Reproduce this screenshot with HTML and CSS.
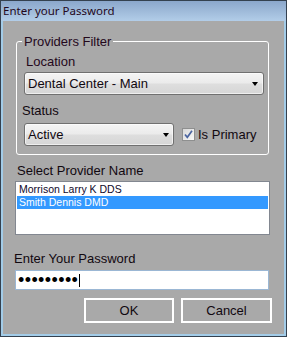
FILE: index.html
```html
<!DOCTYPE html>
<html>
<head>
<meta charset="utf-8">
<link rel="stylesheet" href="styles.css">
</head>
<body>
<div class="window">
  <div class="titlebar">Enter your Password</div>
  <div class="client">
    <div class="group">
      <span class="legend">Providers Filter</span>
      <div class="label label-location">Location</div>
      <div class="combo combo-location">
        <span class="combo-text">Dental Center - Main</span>
        <span class="arrow"></span>
      </div>
      <div class="label label-status">Status</div>
      <div class="status-row">
        <div class="combo combo-status">
          <span class="combo-text">Active</span>
          <span class="arrow"></span>
        </div>
        <div class="check">
          <span class="box"><svg width="11" height="11" viewBox="0 0 11 11"><path d="M2 5.5 L4.3 8.3 L9 1.8" fill="none" stroke="#4a64a0" stroke-width="1.7"/></svg></span>
          <span class="check-label">Is Primary</span>
        </div>
      </div>
    </div>
    <div class="label label-select">Select Provider Name</div>
    <div class="listbox">
      <div class="item">Morrison Larry K DDS</div>
      <div class="item selected">Smith Dennis DMD</div>
    </div>
    <div class="label label-password">Enter Your Password</div>
    <div class="passbox"><span class="dots">•••••••••</span><span class="caret"></span></div>
    <div class="buttons">
      <div class="btn btn-ok">OK</div>
      <div class="btn btn-cancel">Cancel</div>
    </div>
  </div>
</div>
</body>
</html>
```
FILE: styles.css
```css
* { box-sizing: border-box; }
html, body { margin: 0; padding: 0; }
body {
  width: 287px;
  height: 337px;
  overflow: hidden;
  font-family: "Liberation Sans", Arial, sans-serif;
  font-size: 13px;
  color: #110810;
}
.window {
  width: 287px;
  height: 337px;
  border: 1px solid #34414f;
  background: #a3cce8;
  padding: 0 2px 2px 2px;
  display: flex;
  flex-direction: column;
}
.titlebar {
  height: 20px;
  flex: none;
  background: linear-gradient(#8ba7cb, #b2cde8);
  font-family: "Noto Sans", "Open Sans", sans-serif;
  font-size: 11.5px;
  line-height: 19px;
  color: #24081c;
  margin: 0 -2px;
  padding: 0 2px;
}
.client {
  flex: 1;
  background: #a9a9a9;
  padding: 20px 0 0 0;
}
.group {
  position: relative;
  margin-left: 13px;
  width: 253px;
  height: 114px;
  border: 1px solid #ffffff;
  border-radius: 3px;
}
.legend {
  position: absolute;
  left: 5px;
  top: -8px;
  padding: 0 2px;
  background: #a9a9a9;
  line-height: 15px;
  color: #24081c;
}
.label {
  line-height: 15px;
}
.label-location { margin: 12px 0 0 9px; color: #24081c; }
.label-status { margin: 8px 0 0 5px; }
.combo {
  position: relative;
  height: 23px;
  border: 1px solid #707070;
  border-radius: 3px;
  background: linear-gradient(#f4f4f4, #ebebeb 48%, #dedede 52%, #d6d6d6);
  box-shadow: inset 0 0 0 1px rgba(255,255,255,0.6);
  display: flex;
  align-items: center;
}
.combo-text { padding-left: 3px; line-height: 15px; }
.combo-location { margin: 3px 0 0 7px; width: 240px; }
.arrow {
  position: absolute;
  right: 5px;
  top: 9px;
  width: 0;
  height: 0;
  border-left: 3.5px solid transparent;
  border-right: 3.5px solid transparent;
  border-top: 4px solid #000;
}
.combo-status .arrow { right: 4px; }
.status-row {
  display: flex;
  align-items: center;
  margin: 5px 0 0 7px;
}
.combo-status { width: 150px; }
.check {
  display: flex;
  align-items: center;
  margin-left: 8px;
  margin-top: -1px;
}
.box {
  width: 13px;
  height: 13px;
  border: 1px solid #8e8f8f;
  background: linear-gradient(135deg, #d8d8d8, #f8f8f8);
  display: flex;
  align-items: center;
  justify-content: center;
}
.check-label { margin-left: 3px; line-height: 15px; }
.label-select { margin: 8px 0 0 14px; }
.listbox {
  margin: 3px 0 0 12px;
  width: 255px;
  height: 54px;
  border: 1px solid #828790;
  background: #fff;
  padding: 1px;
}
.item {
  height: 13px;
  line-height: 13px;
  font-size: 10.5px;
  padding-left: 2px;
  color: #10082a;
}
.item.selected {
  background: #3399ff;
  color: #fff;
}
.label-password { margin: 16px 0 0 11px; }
.passbox {
  margin: 4px 0 0 12px;
  width: 254px;
  height: 20px;
  border: 1px solid #9bb7d4;
  background: #fff;
  display: flex;
  align-items: center;
  padding-left: 2px;
}
.dots {
  font-size: 18px;
  letter-spacing: 0.4px;
  line-height: 16px;
  color: #000;
}
.caret {
  width: 1px;
  height: 13px;
  background: #000;
  margin-left: 1px;
}
.buttons {
  display: flex;
  justify-content: flex-end;
  gap: 7px;
  margin-top: 8px;
  padding-right: 12px;
}
.btn {
  height: 25px;
  border: 2px solid #ffffff;
  display: flex;
  align-items: center;
  justify-content: center;
  line-height: 15px;
}
.btn-ok { width: 90px; }
.btn-cancel { width: 91px; }
```
